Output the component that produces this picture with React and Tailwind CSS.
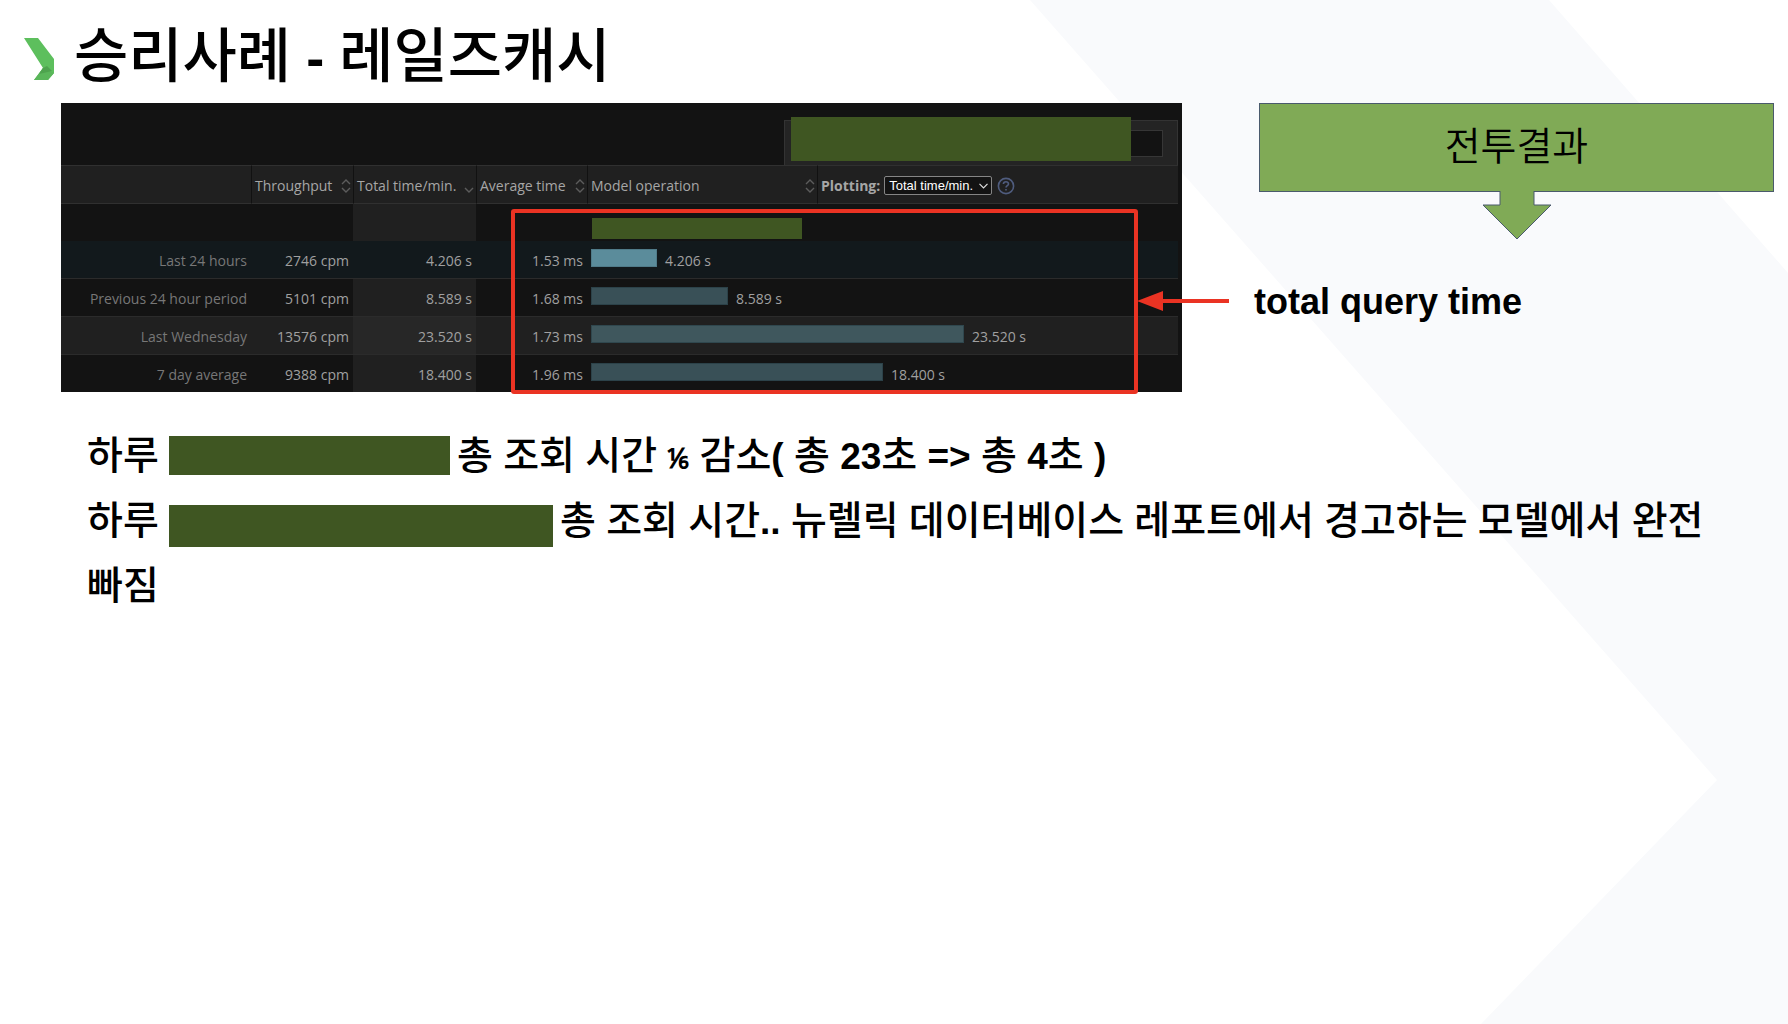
import React from "react";

const LATIN = "font-['Liberation_Sans',sans-serif]";

/* Sets Hangul runs in the Korean face and everything else in the Latin face. */
function Mixed({ text, hangul }) {
  return text.split(/([가-힣]+)/).map((part, i) =>
    /[가-힣]/.test(part) ? (
      <span key={i} className={hangul}>{part}</span>
    ) : (
      part
    )
  );
}

const BODY_HANGUL = "font-['Noto_Sans_CJK_KR',sans-serif] text-[39px] leading-none font-medium";
const TITLE_HANGUL = "font-['Noto_Sans_CJK_KR',sans-serif] text-[59px] leading-none font-medium";

function Backdrop() {
  return (
    <svg className="absolute inset-0 h-full w-full" viewBox="0 0 1788 1024" preserveAspectRatio="none" aria-hidden="true">
      <path d="M1030 0H1549L1788 273V1024H1481L1717 780Z" fill="#f9fafc" />
    </svg>
  );
}

function Chevron() {
  return (
    <svg className="h-[42px] w-[30px] shrink-0" viewBox="0 0 30 42" aria-hidden="true">
      <path d="M0 0H14L30 21V35L24 42H10L19 30Z" fill="#5dbf5d" />
      <path d="M19 30L30 35L24 42H10Z" fill="#5ab65a" />
      <path d="M19 30L23 28L28 33L15 36Z" fill="#4ea34e" />
    </svg>
  );
}

function Sort({ both }) {
  return (
    <svg className="h-[14px] w-[10px] shrink-0" viewBox="0 0 10 14" fill="none" stroke="#5c5c5c" strokeWidth="1.4" aria-hidden="true">
      {both && <path d="M1 5L5 1L9 5" />}
      <path d="M1 9L5 13L9 9" />
    </svg>
  );
}

const HEAD = "h-[39px] border-y border-[#303030] bg-[#202020] pt-0.5 pr-0.5 pb-0 pl-[3px] text-left font-normal text-[#a6a6a6]";
const DIVIDER = " border-l border-l-[#111111]";

function SortHead({ label, both }) {
  return (
    <th scope="col" className={HEAD + DIVIDER}>
      <button type="button" className="flex w-full items-center justify-between whitespace-nowrap">
        {label}
        <Sort both={both} />
      </button>
    </th>
  );
}

const rows = [
  { name: "Last 24 hours", cpm: "2746 cpm", total: "4.206 s", avg: "1.53 ms", size: 66, row: "bg-[#12191c]", cell: "", bar: "bg-[#5b8c9b] border-[#507b89]" },
  { name: "Previous 24 hour period", cpm: "5101 cpm", total: "8.589 s", avg: "1.68 ms", size: 137, row: "", cell: "bg-[#202020]", bar: "bg-[#395057] border-[#2c4249]" },
  { name: "Last Wednesday", cpm: "13576 cpm", total: "23.520 s", avg: "1.73 ms", size: 373, row: "bg-[#202020]", cell: "bg-[#272727]", bar: "bg-[#3f575d] border-[#2f474e]" },
  { name: "7 day average", cpm: "9388 cpm", total: "18.400 s", avg: "1.96 ms", size: 292, row: "", cell: "bg-[#202020]", bar: "bg-[#395057] border-[#2c4249]" },
];

function Panel() {
  return (
    <section className="relative bg-[#131313] pr-1 font-['Open_Sans',sans-serif] text-sm text-[#a0a0a0]">
      <div className="flex justify-end pt-[14px]">
        <div className="mt-[3px] flex h-[45px] items-center border border-b-0 border-[#333333] bg-[#242424] pr-[14px] pl-[6px]">
          <div className="-mt-2 h-[44px] w-[340px] bg-[#3f5622]" />
          <input aria-label="Filter" className="h-[27px] w-8 border border-l-0 border-[#363636] bg-[#131313]" />
        </div>
      </div>
      <table className="w-full table-fixed border-separate border-spacing-0">
        <colgroup>
          <col className="w-[190px]" />
          <col className="w-[102px]" />
          <col className="w-[123px]" />
          <col className="w-[111px]" />
          <col className="w-[230px]" />
          <col />
        </colgroup>
        <thead>
          <tr>
            <td className={HEAD} />
            <SortHead label="Throughput" both />
            <SortHead label="Total time/min." />
            <SortHead label="Average time" both />
            <SortHead label="Model operation" both />
            <th scope="col" className={HEAD + DIVIDER}>
              <div className="flex items-center">
                <label htmlFor="plotting" className="font-bold">Plotting:</label>
                <span className="relative ml-1 flex items-center">
                  <select id="plotting" className="h-[19px] w-[108px] appearance-none rounded-[2px] border border-[#858585] bg-[#131313] pl-1 font-['Liberation_Sans',sans-serif] text-[13px] leading-4 text-white">
                    <option>Total time/min.</option>
                  </select>
                  <svg className="pointer-events-none absolute right-1 h-[6px] w-[9px]" viewBox="0 0 9 6" fill="none" stroke="#dddddd" strokeWidth="1.2" aria-hidden="true">
                    <path d="M0.5 0.8L4.5 4.8L8.5 0.8" />
                  </svg>
                </span>
                <button type="button" aria-label="Help" className="ml-[5px]">
                  <svg className="h-[18px] w-[18px]" viewBox="0 0 18 18" fill="none" stroke="#4f5c7e" strokeWidth="1.6" aria-hidden="true">
                    <circle cx="9" cy="9" r="7.6" />
                    <path d="M6.4 7C6.5 3.9 11.6 4 11.5 7C11.4 8.7 9 8.7 9 10.6M9 12V13.6" />
                  </svg>
                </button>
              </div>
            </th>
          </tr>
        </thead>
        <tbody>
          <tr>
            <td className="h-[37px]" colSpan={2} />
            <td className="bg-[#202020]" />
            <td />
            <td colSpan={2} className="px-1 pt-[14px] pb-0 align-top">
              <div className="ml-px h-[21px] w-[210px] bg-[#3f5622]" />
            </td>
          </tr>
          {rows.map((r) => (
            <tr key={r.name} className={r.row + " text-right whitespace-nowrap [&>*]:h-[38px] [&>*]:border-b [&>*]:px-1 [&>*]:pt-0.5 [&>*]:pb-0 last:[&>*]:h-[37px] last:[&>*]:border-b-0 [&>*]:border-[#2b2b2b]"}>
              <th scope="row" className="font-normal text-[#777777]">{r.name}</th>
              <td>{r.cpm}</td>
              <td className={r.cell}>{r.total}</td>
              <td>{r.avg}</td>
              <td colSpan={2}>
                <div className="flex items-center gap-2">
                  <div className={"mb-1.5 h-[18px] border " + r.bar} style={{ width: r.size }} />
                  {r.total}
                </div>
              </td>
            </tr>
          ))}
        </tbody>
      </table>
      <div className="pointer-events-none absolute top-[106px] right-[44px] -bottom-[2px] left-[450px] rounded-[3px] border-4 border-[#ea3323]" />
      <svg className="absolute top-[188px] -right-[47px] h-5 w-[92px]" viewBox="0 0 92 20" fill="#ea3323" aria-hidden="true">
        <path d="M0 10L26 0V8H92V12H26V20Z" />
      </svg>
    </section>
  );
}

function Callout() {
  return (
    <div className="ml-[5px] flex flex-col items-center">
      <div className="flex h-[89px] w-full items-center justify-center border border-[#4a5a6c] bg-[#80aa56] pb-2 font-['Noto_Sans_CJK_KR',sans-serif] text-[39px] leading-none font-[350]">
        전투결과
      </div>
      <svg className="-mt-px h-[49px] w-[70px]" viewBox="0 0 70 49" aria-hidden="true">
        <path d="M18 0V14H1L35 48L69 14H52V0" fill="#80aa56" stroke="#4a5a6c" />
      </svg>
    </div>
  );
}

export default function App() {
  return (
    <main className="relative min-h-screen overflow-hidden bg-white text-black">
      <Backdrop />
      <div className="relative">
        <header className="flex h-[103px] items-start gap-5 pl-6">
          <div className="pt-[38px]">
            <Chevron />
          </div>
          <h1 className={LATIN + " pt-[22px] text-[54px] leading-none font-bold whitespace-nowrap"}>
            <Mixed text="승리사례 - 레일즈캐시" hangul={TITLE_HANGUL} />
          </h1>
        </header>
        <div className="grid grid-cols-[1121fr_520fr] items-start gap-[72px] pr-[14px] pl-[61px]">
          <Panel />
          <aside>
            <Callout />
            <p className={LATIN + " mt-[42px] text-[36px] leading-10 font-bold"}>total query time</p>
          </aside>
        </div>
        <div className={LATIN + " mt-8 pr-[60px] pl-[87px] text-[37px] leading-[65px] font-bold"}>
          <p>
            <Mixed text="하루 " hangul={BODY_HANGUL} />
            <span className="mr-[7px] mb-2 inline-block h-[39px] w-[281px] bg-[#3f5622] align-middle" />
            <Mixed text="총 조회 시간 " hangul={BODY_HANGUL} />
            <span className="align-middle text-[28px] leading-none">⅙</span>
            <Mixed text=" 감소( 총 23초 => 총 4초 )" hangul={BODY_HANGUL} />
          </p>
          <p>
            <Mixed text="하루 " hangul={BODY_HANGUL} />
            <span className="mt-1 mr-[7px] inline-block h-[42px] w-[384px] bg-[#3f5622] align-middle" />
            <Mixed text="총 조회 시간.. 뉴렐릭 데이터베이스 레포트에서 경고하는 모델에서 완전 빠짐" hangul={BODY_HANGUL} />
          </p>
        </div>
      </div>
    </main>
  );
}
